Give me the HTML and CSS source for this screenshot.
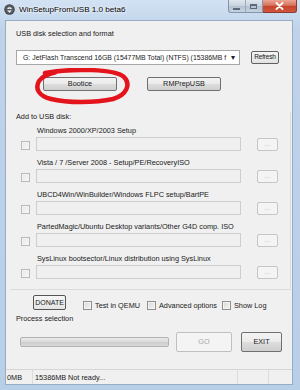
FILE: index.html
```html
<!DOCTYPE html>
<html>
<head>
<meta charset="utf-8">
<link rel="stylesheet" href="styles.css">
</head>
<body>
<div class="window">
  <div class="titlebar">
    <svg class="appicon" width="11" height="11" viewBox="0 0 11 11">
      <circle cx="5.5" cy="5.5" r="5.2" fill="#3b3f45"/>
      <circle cx="5.5" cy="5.5" r="4.2" fill="#5b6068"/>
      <path d="M3 4.5 Q5.5 1.8 8 4.5 L6.6 5 Q5.5 3.8 4.4 5 Z" fill="#fff"/>
      <path d="M3.2 6.4 L5.5 8.8 L7.8 6.4 Z" fill="#fff"/>
    </svg>
    <span class="title">WinSetupFromUSB 1.0 beta6</span>
    <div class="captions">
      <div class="cap-group">
        <span class="cap min"><span class="min-glyph"></span></span>
        <span class="cap max"><span class="max-glyph"></span></span>
      </div>
      <span class="cap close">
        <svg width="9" height="8" viewBox="0 0 9 8"><path d="M1.5 1 L7.5 7 M7.5 1 L1.5 7" stroke="#fff" stroke-width="1.8" stroke-linecap="round"/></svg>
      </span>
    </div>
  </div>
  <div class="client">
    <section class="disk">
      <div class="label">USB disk selection and format</div>
      <div class="disk-row">
        <div class="select"><span class="select-text">G: JetFlash Transcend 16GB (15477MB Total) (NTFS) (15386MB f</span><span class="arrow">&#9662;</span></div>
        <button class="btn refresh">Refresh</button>
      </div>
      <div class="tools-row">
        <button class="btn tool">Bootice</button>
        <button class="btn tool">RMPrepUSB</button>
      </div>
      <svg class="circle" width="100" height="40" viewBox="0 0 100 40">
        <path d="M12 5 C40 0 82 1 91 9 C98 16 94 27 80 31 C62 35 34 35 18 31 C5 28 2 20 6 13 C9 9 14 6 22 4.5" fill="none" stroke="#e3141c" stroke-width="4.5" stroke-linecap="round"/>
      </svg>
    </section>
    <section class="add">
      <div class="label">Add to USB disk:</div>
      <div class="rows">
        <div class="row"><span class="cb"></span><span class="row-label">Windows 2000/XP/2003 Setup</span><span class="field"></span><span class="browse">...</span></div>
        <div class="row"><span class="cb"></span><span class="row-label">Vista / 7 /Server 2008 - Setup/PE/RecoveryISO</span><span class="field"></span><span class="browse">...</span></div>
        <div class="row"><span class="cb"></span><span class="row-label">UBCD4Win/WinBuilder/Windows FLPC setup/BartPE</span><span class="field"></span><span class="browse">...</span></div>
        <div class="row"><span class="cb"></span><span class="row-label">PartedMagic/Ubuntu Desktop variants/Other G4D comp. ISO</span><span class="field"></span><span class="browse">...</span></div>
        <div class="row"><span class="cb"></span><span class="row-label">SysLinux bootsector/Linux distribution using SysLinux</span><span class="field"></span><span class="browse">...</span></div>
      </div>
    </section>
    <section class="bottom">
      <div class="options">
        <button class="btn donate">DONATE</button>
        <span class="opt qemu"><span class="cb on"></span>Test in QEMU</span>
        <span class="opt adv"><span class="cb on"></span>Advanced options</span>
        <span class="opt log"><span class="cb on"></span>Show Log</span>
      </div>
      <div class="label">Process selection</div>
      <div class="process">
        <div class="progress"></div>
        <button class="btn go" disabled>GO</button>
        <button class="btn exit">EXIT</button>
      </div>
    </section>
    <div class="statusbar">
      <span class="sp sp1">0MB</span>
      <span class="sp sp2"><span class="clip">15386MB</span>Not ready...</span>
      <span class="sp sp3"></span>
      <span class="sp sp4"></span>
    </div>
  </div>
</div>
</body>
</html>
```
FILE: styles.css
```css
* { box-sizing: border-box; }
html, body { margin: 0; padding: 0; }
body {
  width: 300px;
  height: 390px;
  overflow: hidden;
  font-family: "Liberation Sans", Arial, sans-serif;
  font-size: 7.3px;
  color: #1a1a1a;
}
.window {
  width: 300px;
  height: 390px;
  display: flex;
  flex-direction: column;
  background: linear-gradient(180deg, #d3e2f3 0px, #bed3ea 30px, #b8cfe8 100%);
}
.titlebar {
  height: 20px;
  display: flex;
  align-items: center;
  padding-left: 4px;
  padding-right: 3px;
}
.appicon { flex: none; margin-top: -2px; }
.title {
  margin-left: 4px;
  margin-top: -2px;
  font-size: 8.1px;
  color: #000;
  text-shadow: 0 0 4px #ffffff, 0 0 2px #ffffff;
}
.captions {
  margin-left: auto;
  align-self: flex-start;
  display: flex;
}
.cap-group {
  display: flex;
  width: 35px;
  height: 13px;
  border: 1px solid #8195ad;
  border-top: none;
  border-radius: 0 0 0 3px;
  background: linear-gradient(180deg, #dfe6ee 0%, #c8d3df 50%, #b3c1d0 51%, #c5d2e0 100%);
  overflow: hidden;
}
.cap {
  display: flex;
  align-items: center;
  justify-content: center;
  height: 13px;
}
.min, .max { width: 17px; }
.min { border-right: 1px solid #9aaabb; }
.min-glyph { width: 7px; height: 2px; background: #5b6b7d; margin-top: 4px; }
.max-glyph { width: 7px; height: 5px; border: 1px solid #5b6b7d; border-top-width: 2px; }
.close {
  width: 34px;
  border: 1px solid #8a3b33;
  border-top: none;
  border-left: none;
  border-radius: 0 0 3px 0;
  background: linear-gradient(180deg, #eba594 0%, #d7735c 45%, #c5432a 50%, #d2573c 100%);
}
.client {
  flex: 1;
  margin: 0 7px 5px 5px;
  background: #f0f0f0;
  border: 1px solid #98adc4;
  display: flex;
  flex-direction: column;
  position: relative;
}
.label { height: 10px; line-height: 10px; white-space: nowrap; }
.btn {
  font-family: inherit;
  font-size: 7.3px;
  color: #1a1a1a;
  padding: 0;
  border: 1px solid #707070;
  border-radius: 2px;
  background: linear-gradient(180deg, #f3f3f3 0%, #ebebeb 48%, #dddddd 50%, #cfcfcf 100%);
  line-height: 1;
}
/* disk section */
.disk {
  position: relative;
  padding: 8px 0 0 10px;
}
.disk-row {
  display: flex;
  align-items: center;
  margin-top: 11px;
}
.select {
  width: 224px;
  height: 15px;
  border: 1px solid #a7a7a7;
  background: #ffffff;
  display: flex;
  align-items: center;
  padding-left: 6px;
}
.select-text {
  width: 207px;
  flex: none;
  white-space: nowrap;
  font-size: 6.9px;
}
.arrow {
  margin-left: 1px;
  font-size: 8px;
  color: #222;
}
.refresh {
  margin-left: 11px;
  width: 28px;
  height: 13px;
  border-color: #606060;
  background: linear-gradient(180deg, #f4f4f4, #e2e2e2);
  font-size: 6.6px;
  letter-spacing: -0.2px;
}
.tools-row {
  display: flex;
  gap: 30px;
  margin-top: 12px;
  padding-left: 27px;
}
.tool { width: 74px; height: 14px; }
.circle {
  position: absolute;
  left: 27px;
  top: 47px;
}
/* add section */
.add {
  margin: 21px 1px 0 4px;
  padding: 0 0 10px 6px;
  border-bottom: 1px solid #dcdcdc;
  border-right: 1px solid #dcdcdc;
}
.rows {
  display: flex;
  flex-direction: column;
  gap: 7px;
  margin-top: 4px;
}
.row {
  display: grid;
  grid-template-columns: 9px 205px 21px;
  grid-template-rows: 10px 14px;
  column-gap: 6px;
  row-gap: 1px;
  padding-left: 5px;
}
.row > .cb { grid-row: 2; grid-column: 1; align-self: center; margin-top: 2px; }
.row-label { grid-row: 1; grid-column: 2; line-height: 10px; padding-left: 1px; white-space: nowrap; }
.field {
  grid-row: 2; grid-column: 2;
  border: 1px solid #cdcdcd;
  background: #f0f0f0;
}
.browse {
  grid-row: 2; grid-column: 3;
  margin-left: 10px;
  width: 21px;
  height: 13px;
  margin-top: 1px;
  border: 1px solid #c2c6ca;
  border-radius: 2px;
  background: #f4f4f4;
  color: #b4b4b4;
  font-size: 7px;
  line-height: 9px;
  text-align: center;
}
.cb {
  display: inline-block;
  width: 9px;
  height: 9px;
  border: 1px solid #b9b9b9;
  background: linear-gradient(135deg, #e4e4e4, #f8f8f8);
  box-shadow: inset 0 0 0 1px #f4f4f4;
}
.cb.on { border-color: #8e8f8f; background: linear-gradient(135deg, #d6d6d6, #f6f6f6); }
/* bottom */
.bottom { padding-left: 10px; }
.options {
  display: flex;
  align-items: center;
  margin-top: 5px;
  height: 15px;
}
.donate {
  margin-left: 17px;
  width: 33px;
  height: 15px;
  border-color: #555;
  background: linear-gradient(180deg, #f6f6f6, #e4e4e4);
  font-size: 7px;
}
.opt {
  display: inline-flex;
  align-items: center;
  white-space: nowrap;
  margin-top: 5px;
}
.opt .cb { margin-right: 3px; }
.qemu { margin-left: 17px; width: 64px; }
.adv { width: 75px; }
.bottom .label { margin-top: 4px; }
.process {
  display: flex;
  align-items: center;
  margin-top: 8px;
  padding-left: 4px;
}
.progress {
  width: 149px;
  height: 10px;
  border: 1px solid #b2b2b2;
  border-radius: 2px;
  background: linear-gradient(180deg, #eaeaea 0%, #dadada 50%, #cdcdcd 51%, #d9d9d9 100%);
}
.go {
  margin-left: 7px;
  width: 56px;
  height: 20px;
  border-color: #c0c0c0;
  background: #f4f4f4;
  color: #a8a8a8;
}
.exit {
  margin-left: 9px;
  width: 41px;
  height: 20px;
}
.statusbar {
  margin-top: auto;
  height: 15px;
  border-top: 1px solid #d5d5d5;
  display: flex;
  align-items: stretch;
}
.sp {
  display: flex;
  align-items: center;
  white-space: nowrap;
  border-right: 1px solid #dcdcdc;
  overflow: hidden;
}
.sp1 { width: 27px; padding-left: 1px; }
.sp2 { width: 205px; padding-left: 2px; }
.clip { width: 31px; overflow: hidden; display: inline-block; margin-right: 2px; }
.sp3 { width: 31px; }
.sp4 { flex: 1; border-right: none; }
```
